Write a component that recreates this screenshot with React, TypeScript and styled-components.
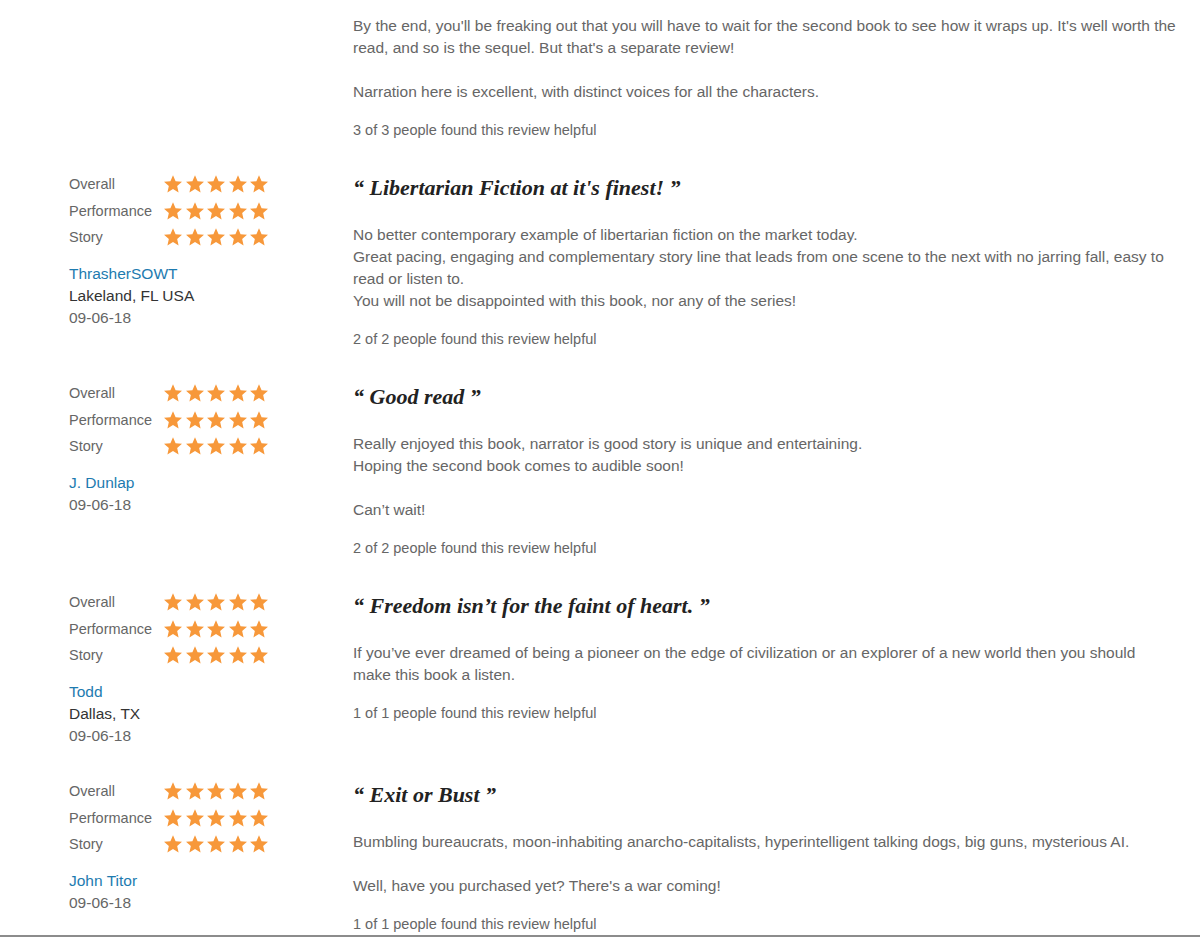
import React, { FC } from "react";
import styled, { createGlobalStyle } from "styled-components";

const GlobalStyle = createGlobalStyle`
  html, body {
    margin: 0;
    padding: 0;
    background: #fff;
  }
  body {
    font-family: "Liberation Sans", Arial, sans-serif;
  }
`;

type Review = {
  title?: string;
  paragraphs: string[][];
  helpful: string;
  author?: string;
  location?: string;
  date?: string;
};

const reviews: Review[] = [
  {
    paragraphs: [
      [
        "By the end, you'll be freaking out that you will have to wait for the second book to see how it wraps up. It's well worth the read, and so is the sequel. But that's a separate review!",
      ],
      ["Narration here is excellent, with distinct voices for all the characters."],
    ],
    helpful: "3 of 3 people found this review helpful",
  },
  {
    title: "Libertarian Fiction at it's finest!",
    paragraphs: [
      [
        "No better contemporary example of libertarian fiction on the market today.",
        "Great pacing, engaging and complementary story line that leads from one scene to the next with no jarring fall, easy to read or listen to.",
        "You will not be disappointed with this book, nor any of the series!",
      ],
    ],
    helpful: "2 of 2 people found this review helpful",
    author: "ThrasherSOWT",
    location: "Lakeland, FL USA",
    date: "09-06-18",
  },
  {
    title: "Good read",
    paragraphs: [
      [
        "Really enjoyed this book, narrator is good story is unique and entertaining.",
        "Hoping the second book comes to audible soon!",
      ],
      ["Can\u2019t wait!"],
    ],
    helpful: "2 of 2 people found this review helpful",
    author: "J. Dunlap",
    date: "09-06-18",
  },
  {
    title: "Freedom isn\u2019t for the faint of heart.",
    paragraphs: [
      [
        "If you\u2019ve ever dreamed of being a pioneer on the edge of civilization or an explorer of a new world then you should make this book a listen.",
      ],
    ],
    helpful: "1 of 1 people found this review helpful",
    author: "Todd",
    location: "Dallas, TX",
    date: "09-06-18",
  },
  {
    title: "Exit or Bust",
    paragraphs: [
      [
        "Bumbling bureaucrats, moon-inhabiting anarcho-capitalists, hyperintelligent talking dogs, big guns, mysterious AI.",
      ],
      ["Well, have you purchased yet? There's a war coming!"],
    ],
    helpful: "1 of 1 people found this review helpful",
    author: "John Titor",
    date: "09-06-18",
  },
];

const Page = styled.div`
  height: 937px;
  overflow: hidden;
  box-sizing: border-box;
  border-bottom: 2px solid #8c8c8c;
  padding: 15px 0 0 69px;
`;

const ReviewRow = styled.div`
  display: flex;
  align-items: flex-start;
  padding-bottom: 31px;
`;

const Side = styled.div`
  width: 284px;
  flex-shrink: 0;
`;

const RatingRow = styled.div`
  display: flex;
  align-items: center;
  height: 26.5px;
`;

const RatingLabel = styled.span`
  width: 94px;
  font-size: 14.5px;
  color: #666;
`;

const Stars = styled.div`
  display: flex;
  gap: 1.5px;
`;

const Author = styled.div`
  margin-top: 12.5px;
  font-size: 15.5px;
  line-height: 22px;
  color: #1d7bb0;
`;

const Meta = styled.div<{ $dark?: boolean }>`
  font-size: 15.5px;
  line-height: 22px;
  color: ${(p) => (p.$dark ? "#333" : "#666")};
`;

const Main = styled.div`
  width: 824px;
`;

const Title = styled.h3`
  margin: 2px 0 21px;
  font-family: "Liberation Serif", "Times New Roman", serif;
  font-style: italic;
  font-weight: bold;
  font-size: 22px;
  line-height: 30px;
  color: #222;
`;

const Paragraph = styled.p`
  margin: 0 0 22px;
  font-size: 15.5px;
  line-height: 22px;
  color: #666;

  &:last-of-type {
    margin-bottom: 17px;
  }
`;

const Helpful = styled.div`
  font-size: 14.5px;
  line-height: 20px;
  color: #666;
`;

const Star: FC = () => (
  <svg width="20" height="20" viewBox="0 0 24 24">
    <path
      fill="#f7983a"
      d="M12 1.6l3.1 7.1 7.7.7-5.8 5.1 1.7 7.6L12 18.1l-6.7 4 1.7-7.6-5.8-5.1 7.7-.7z"
    />
  </svg>
);

const Rating: FC<{ label: string }> = ({ label }) => (
  <RatingRow>
    <RatingLabel>{label}</RatingLabel>
    <Stars>
      {[0, 1, 2, 3, 4].map((i) => (
        <Star key={i} />
      ))}
    </Stars>
  </RatingRow>
);

const ReviewItem: FC<{ review: Review }> = ({ review }) => (
  <ReviewRow>
    <Side>
      {review.author && (
        <>
          <Rating label="Overall" />
          <Rating label="Performance" />
          <Rating label="Story" />
          <Author>{review.author}</Author>
          {review.location && <Meta $dark>{review.location}</Meta>}
          <Meta>{review.date}</Meta>
        </>
      )}
    </Side>
    <Main>
      {review.title && <Title>{`\u201C ${review.title} \u201D`}</Title>}
      {review.paragraphs.map((lines, i) => (
        <Paragraph key={i}>
          {lines.map((line, j) => (
            <React.Fragment key={j}>
              {j > 0 && <br />}
              {line}
            </React.Fragment>
          ))}
        </Paragraph>
      ))}
      <Helpful>{review.helpful}</Helpful>
    </Main>
  </ReviewRow>
);

const App: FC = () => (
  <>
    <GlobalStyle />
    <Page>
      {reviews.map((r, i) => (
        <ReviewItem key={i} review={r} />
      ))}
    </Page>
  </>
);

export default App;
